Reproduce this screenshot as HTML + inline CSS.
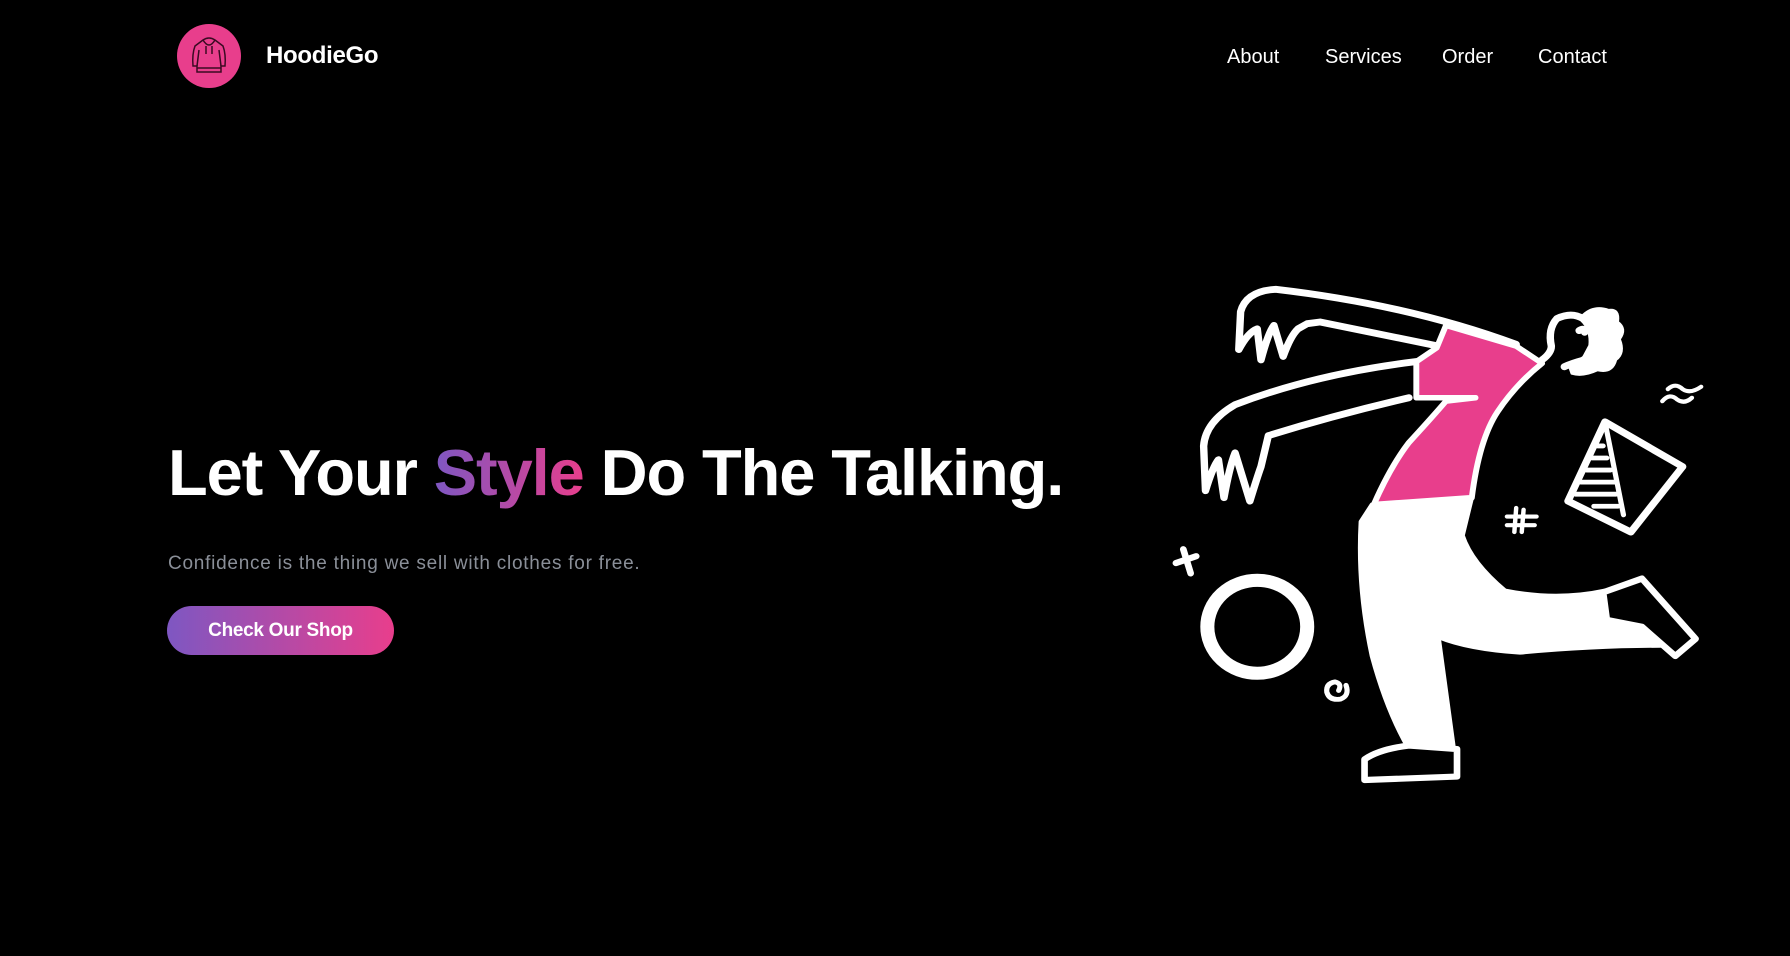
<!DOCTYPE html>
<html><head><meta charset="utf-8"><style>
*{margin:0;padding:0;box-sizing:border-box}
body{width:1790px;height:956px;background:#000;overflow:hidden;font-family:"Liberation Sans",sans-serif;color:#fff;position:relative}
.logo{position:absolute;left:177px;top:24px;width:64px;height:64px;border-radius:50%;background:#e83e8c}
.brand{position:absolute;left:266px;top:42px;font-size:24px;font-weight:bold;letter-spacing:-0.3px}
.nav a{position:absolute;top:46px;font-size:20px;color:#fff;text-decoration:none}
h1{position:absolute;left:168px;top:435px;font-size:65px;font-weight:bold;letter-spacing:-1.1px;white-space:nowrap}
.g{background:linear-gradient(90deg,#7e57c2,#e83e8c);-webkit-background-clip:text;background-clip:text;color:transparent}
.sub{position:absolute;left:168px;top:553px;font-size:19px;letter-spacing:0.75px;color:#8a8f98}
.btn{position:absolute;left:167px;top:606px;width:227px;height:49px;border-radius:25px;background:linear-gradient(90deg,#7e57c2,#e83e8c);font-size:19px;font-weight:bold;text-align:center;line-height:49px;letter-spacing:-0.3px}
svg.ill{position:absolute;left:1150px;top:260px}
</style></head><body>
<div class="logo"><svg width="64" height="64" viewBox="0 0 64 64" fill="none" stroke="#3a0a22" stroke-width="1.5"><path d="M26 16 Q32 12 38 16 L46 22 Q49 30 48 42 L44 42 L44 48 L20 48 L20 42 L16 42 Q15 30 18 22 Z"/><path d="M26 16 Q32 26 38 16"/><path d="M29 22 V30 M35 22 V30 M20 42 L22 26 M44 42 L42 26 M20 44 H44"/></svg></div>
<div class="brand">HoodieGo</div>
<div class="nav"><a style="left:1227px">About</a><a style="left:1325px">Services</a><a style="left:1442px">Order</a><a style="left:1538px">Contact</a></div>
<h1>Let Your <span class="g">Style</span> Do The Talking.</h1>
<div class="sub">Confidence is the thing we sell with clothes for free.</div>
<div class="btn">Check Our Shop</div>
<svg class="ill" width="580" height="540" viewBox="0 0 1568 1568" preserveAspectRatio="none" fill="none" stroke="#fff" stroke-width="20" stroke-linecap="round" stroke-linejoin="round">
<path d="M990 245 Q700 130 340 85 Q260 90 245 150 L240 260 Q265 210 290 200 L300 290 Q320 210 335 190 L360 280 Q380 220 400 200 L425 185 L460 180 L780 250"/>
<path d="M720 295 Q450 330 230 420 Q150 470 145 540 L150 670 Q170 600 185 580 L200 690 Q215 600 230 560 L270 700 Q290 630 300 600 L320 510 Q500 450 700 400"/>
<path d="M800 190 L990 250 L1060 300 Q990 360 940 440 Q890 520 870 690 L605 710 Q650 600 700 530 Q760 460 800 410 L880 400 L720 400 L720 295 L775 255 Z" fill="#e83e8c" stroke-width="16"/>
<path d="M600 710 L870 690 L845 800 Q870 880 960 960 Q1100 990 1230 960 L1240 1040 L1330 1060 L1380 1120 Q1200 1120 1000 1140 Q860 1130 780 1095 L820 1410 L700 1420 Q640 1310 600 1150 Q560 950 570 760 Z" fill="#fff" stroke-width="12"/>
<path d="M580 1450 Q620 1420 700 1410 L830 1420 L830 1500 L580 1510 Z" fill="#000" stroke-width="18"/>
<path d="M1225 965 L1330 925 L1475 1100 L1420 1150 L1330 1065 L1235 1045 Z" fill="#000" stroke-width="18"/>
<path d="M1060 290 Q1085 270 1085 250 Q1075 200 1100 170 Q1140 150 1170 170 Q1200 200 1195 250 Q1180 280 1175 290 Q1140 300 1120 310"/>
<path d="M1170 160 Q1200 130 1240 145 Q1270 140 1265 180 Q1290 200 1270 230 Q1285 270 1260 290 Q1250 330 1210 320 Q1170 340 1140 330 L1130 300 Q1180 290 1190 250 Q1200 200 1170 160 Z" fill="#fff" stroke-width="6"/>
<path d="M1160 205 Q1175 195 1175 210"/>
<path d="M1230 470 L1440 600 L1300 790 L1130 700 Z"/>
<path d="M1230 470 L1280 740 M1210 540 H1225 M1195 575 H1235 M1180 610 H1245 M1165 645 H1255 M1150 680 H1260 M1200 715 H1265" stroke-width="14"/>
<circle cx="290" cy="1065" r="135" stroke-width="38"/>
<path d="M510 1250 Q520 1230 500 1225 Q475 1230 478 1255 Q485 1280 515 1275 Q540 1265 530 1235" stroke-width="14"/>
<path d="M70 880 L125 860 M90 840 L110 910" stroke-width="18"/>
<path d="M990 720 L985 790 M1010 725 L1005 790 M965 745 L1045 745 M965 770 L1040 770" stroke-width="12"/>
<path d="M1385 410 Q1405 385 1425 405 Q1445 420 1465 400 M1400 375 Q1420 355 1440 375 Q1460 390 1490 368" stroke-width="12"/>
</svg>
</body></html>
